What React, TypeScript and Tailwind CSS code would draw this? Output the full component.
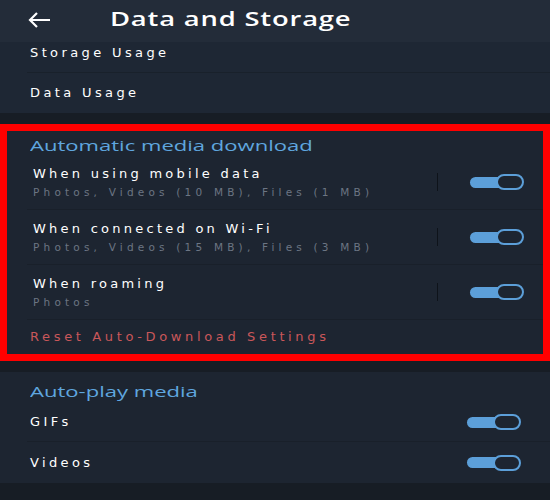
const Toggle = () => {
    return (
        <div className="relative w-[54px] h-[17px] flex items-center">
            <div className="absolute left-0 w-[34px] h-[11px] rounded-full bg-[#5c9fd9]" />
            <div className="absolute right-0 w-[28px] h-[16px] rounded-full border-2 border-[#5c9fd9] bg-[#1d2531]" />
        </div>
    );
};

const hand = "font-['DejaVu_Sans',sans-serif]";
const head = "inline-block origin-left font-['Open_Sans',sans-serif] font-medium";

const Row = ({ title, sub }: { title: string; sub: string }) => {
    return (
        <div className="flex items-center h-[54px] pl-[26px] pr-[19px]">
            <div className="flex-1 flex flex-col gap-[1px]">
                <div className={`${hand} text-[13px] text-white tracking-[0.25em] leading-[18px]`}>{title}</div>
                <div className={`${hand} text-[10.5px] text-[#6c7583] tracking-[0.4em] leading-[16px]`}>{sub}</div>
            </div>
            <div className="w-px h-[18px] bg-[#0e131a] mr-[32px]" />
            <Toggle />
        </div>
    );
};

const App = () => {
    return (
        <div className="w-[550px] h-[500px] bg-[#171d25] overflow-hidden flex flex-col">
            <div className="h-[42px] bg-[#232c39] flex items-center shrink-0">
                <svg className="ml-[28px] -mt-[3px]" width="23" height="16" viewBox="0 0 23 16" fill="none" stroke="white" strokeWidth="2.2">
                    <path d="M22 8H2M9 1L2 8l7 7" />
                </svg>
                <div className="ml-[59px] -mt-[3px] text-white text-[19px]">
                    <span className={`${head} font-semibold scale-x-[1.44] tracking-[0.03em]`}>Data and Storage</span>
                </div>
            </div>
            <div className="bg-[#1e2734] flex flex-col shrink-0">
                <div className={`${hand} h-[30px] pt-[1px] leading-[19px] pl-[30px] text-[13px] text-white tracking-[0.26em]`}>Storage Usage</div>
                <div className="ml-[27px] h-px bg-[#19212b]" />
                <div className={`${hand} h-[40px] flex items-center pl-[30px] text-[13px] text-white tracking-[0.26em]`}>Data Usage</div>
            </div>
            <div className="h-[11px] shrink-0" />
            <div className="border-[7px] border-[#ff0000] bg-[#1d2531] flex flex-col shrink-0 h-[237px]">
                <div className="pl-[23px] pt-[4px] h-[24px] leading-[20px] text-[#5fa6df] text-[15px]">
                    <span className={`${head} scale-x-[1.47]`}>Automatic media download</span>
                </div>
                <Row title="When using mobile data" sub="Photos, Videos (10 MB), Files (1 MB)" />
                <div className="ml-[20px] h-px bg-[#19202a]" />
                <Row title="When connected on Wi-Fi" sub="Photos, Videos (15 MB), Files (3 MB)" />
                <div className="ml-[20px] h-px bg-[#19202a]" />
                <Row title="When roaming" sub="Photos" />
                <div className="ml-[20px] h-px bg-[#19202a]" />
                <div className={`${hand} pl-[23px] h-[34px] flex items-center text-[13px] text-[#c9575a] tracking-[0.28em]`}>Reset Auto-Download Settings</div>
            </div>
            <div className="h-[11px] shrink-0" />
            <div className="bg-[#1d2531] flex flex-col shrink-0 h-[111px]">
                <div className="pl-[30px] pt-[9px] h-[31px] leading-[20px] text-[#5fa6df] text-[15px]">
                    <span className={`${head} scale-x-[1.47]`}>Auto-play media</span>
                </div>
                <div className="flex items-center h-[38px] pl-[30px] pr-[29px]">
                    <div className={`${hand} flex-1 text-[13px] text-white tracking-[0.26em]`}>GIFs</div>
                    <Toggle />
                </div>
                <div className="ml-[27px] h-px bg-[#19202a]" />
                <div className="flex items-center h-[41px] pl-[30px] pr-[29px]">
                    <div className={`${hand} flex-1 text-[13px] text-white tracking-[0.26em]`}>Videos</div>
                    <Toggle />
                </div>
            </div>
        </div>
    );
};

export default App;
